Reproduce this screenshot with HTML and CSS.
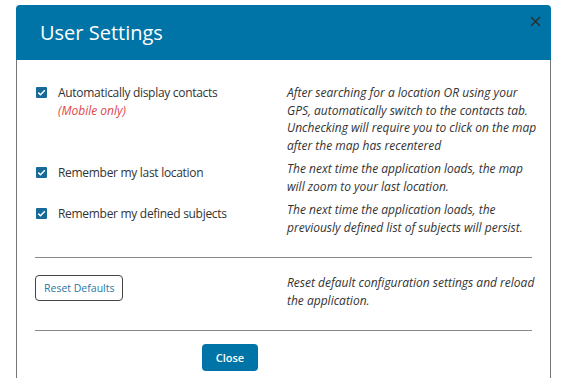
FILE: index.html
```html
<!DOCTYPE html>
<html lang="en">

<head>
    <meta charset="UTF-8">
    <meta name="viewport" content="width=device-width, initial-scale=1.0">
    <title>User Settings</title>
    <link rel="stylesheet" href="styles.css">
</head>

<body>
    <div class="dialog">
        <div class="dialog-header">
            <h1>User Settings</h1>
            <button class="close-x" aria-label="Close">
                <svg width="11" height="11" viewBox="0 0 11 11">
                    <path d="M1 1 L10 10 M10 1 L1 10" stroke="#2b2b2b" stroke-width="1.3" fill="none" />
                </svg>
            </button>
        </div>

        <div class="dialog-body">
            <div class="setting setting-first">
                <label class="check">
                    <span class="box"><svg width="11" height="11" viewBox="0 0 11 11"><path d="M2.3 5.6 L4.5 7.7 L8.8 3.3" stroke="#fff" stroke-width="1.5" fill="none" /></svg></span>
                    <span>Automatically display contacts<br><em class="note">(Mobile only)</em></span>
                </label>
                <p class="desc">After searching for a location OR using your GPS, automatically switch to the contacts tab. Unchecking will require you to click on the map after the map has recentered</p>
            </div>

            <div class="setting">
                <label class="check">
                    <span class="box"><svg width="11" height="11" viewBox="0 0 11 11"><path d="M2.3 5.6 L4.5 7.7 L8.8 3.3" stroke="#fff" stroke-width="1.5" fill="none" /></svg></span>
                    <span>Remember my last location</span>
                </label>
                <p class="desc">The next time the application loads, the map will zoom to your last location.</p>
            </div>

            <div class="setting">
                <label class="check">
                    <span class="box"><svg width="11" height="11" viewBox="0 0 11 11"><path d="M2.3 5.6 L4.5 7.7 L8.8 3.3" stroke="#fff" stroke-width="1.5" fill="none" /></svg></span>
                    <span>Remember my defined subjects</span>
                </label>
                <p class="desc">The next time the application loads, the previously defined list of subjects will persist.</p>
            </div>

            <hr>

            <div class="setting reset-row">
                <div><button class="btn-reset">Reset Defaults</button></div>
                <p class="desc">Reset default configuration settings and reload the application.</p>
            </div>

            <hr>

            <div class="footer">
                <button class="btn-close">Close</button>
            </div>
        </div>
    </div>
</body>

</html>
```

FILE: styles.css
```css
body {
    margin: 0;
    background: #fff;
    font-family: "Open Sans", Arial, sans-serif;
    color: #333;
}

.dialog {
    width: 535px;
    margin: 5px 0 0 16px;
}

.dialog-header {
    display: flex;
    justify-content: space-between;
    align-items: flex-start;
    height: 55px;
    background: #0074a6;
    border-radius: 4px 4px 0 0;
}

.dialog-header h1 {
    margin: 0;
    padding-left: 24px;
    font-size: 20px;
    font-weight: 400;
    line-height: 55px;
    color: #fff;
}

.close-x {
    margin: 10px 10px 0 0;
    padding: 0;
    border: 0;
    background: none;
    cursor: pointer;
}

.dialog-body {
    border: 1px solid #777;
    border-top: 0;
    height: 310px;
    padding: 24px 18px 0 18px;
}

.setting {
    display: grid;
    grid-template-columns: 252px 1fr;
}

.check {
    display: flex;
    align-items: flex-start;
    font-size: 12px;
    letter-spacing: -0.3px;
    line-height: 17.5px;
    padding-top: 4px;
}

.setting-first .check {
    padding-top: 0;
}

.box {
    width: 11px;
    height: 11px;
    margin: 3px 11px 0 1px;
    background: #17699a;
    border-radius: 1px;
}

.box svg {
    display: block;
}

.note {
    color: #e0464b;
    letter-spacing: 0;
}

.desc {
    margin: 0 -8px 6px 0;
    font-size: 12px;
    font-style: italic;
    line-height: 17.5px;
}

hr {
    margin: 15px 0 0;
    border: 0;
    border-top: 1px solid #888;
}

.reset-row {
    padding-top: 17px;
    margin-bottom: 8px;
}

.btn-reset {
    height: 26px;
    padding: 0 8px;
    border: 1px solid #444;
    border-radius: 4px;
    background: #fff;
    color: #2a78a6;
    font-family: inherit;
    font-size: 10.5px;
}

.reset-row .desc {
    margin-top: -1px;
}

.footer {
    padding: 13px 0 0 167px;
}

.btn-close {
    width: 56px;
    height: 27px;
    border: 0;
    border-radius: 4px;
    background: #0074a6;
    color: #fff;
    font-family: inherit;
    font-size: 11px;
    font-weight: 600;
}
```
